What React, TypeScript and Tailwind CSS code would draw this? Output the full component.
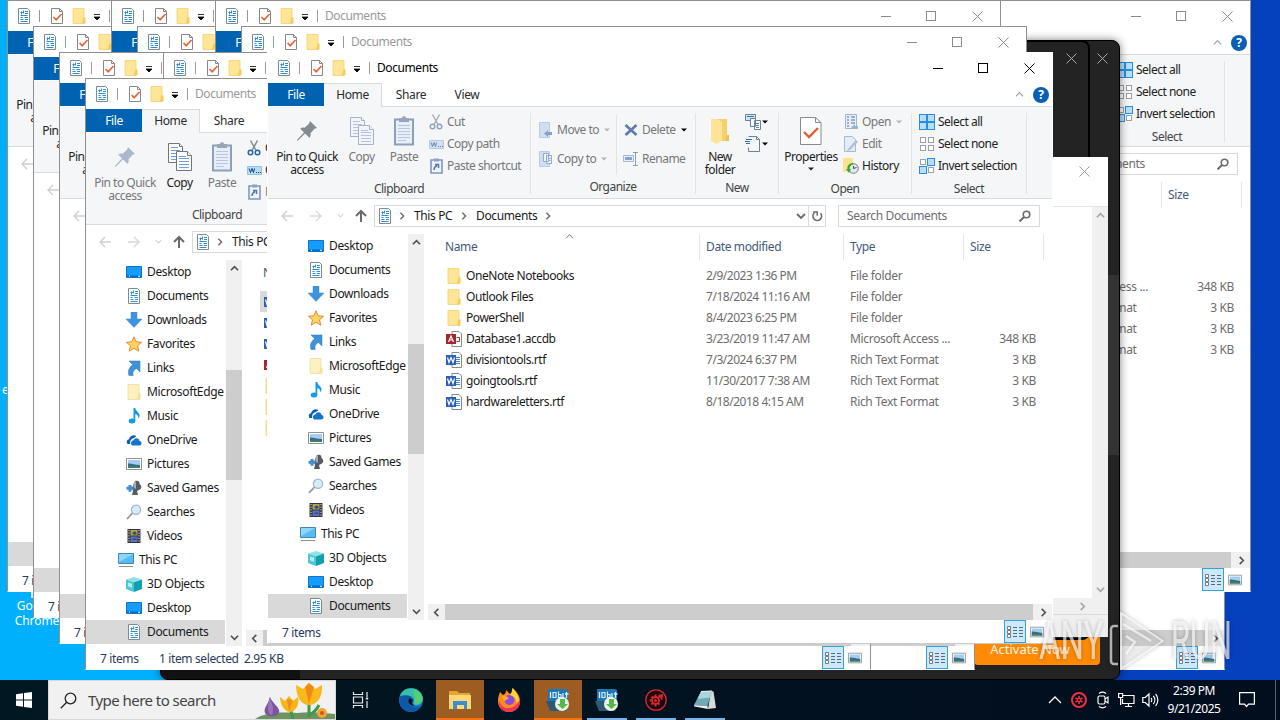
import React from 'react';

type FileRow = { name: string; date: string; type: string; size?: string; icon: string };

// which part of a window is not covered by the ones in front of it
type Part = 'all' | 'top' | 'left' | 'right' | 'foot';

const FILES: FileRow[] = [
  { name: 'OneNote Notebooks', date: '2/9/2023 1:36 PM', type: 'File folder', icon: 'folder' },
  { name: 'Outlook Files', date: '7/18/2024 11:16 AM', type: 'File folder', icon: 'folder' },
  { name: 'PowerShell', date: '8/4/2023 6:25 PM', type: 'File folder', icon: 'folder' },
  { name: 'Database1.accdb', date: '3/23/2019 11:47 AM', type: 'Microsoft Access ...', size: '348 KB', icon: 'access' },
  { name: 'divisiontools.rtf', date: '7/3/2024 6:37 PM', type: 'Rich Text Format', size: '3 KB', icon: 'word' },
  { name: 'goingtools.rtf', date: '11/30/2017 7:38 AM', type: 'Rich Text Format', size: '3 KB', icon: 'word' },
  { name: 'hardwareletters.rtf', date: '8/18/2018 4:15 AM', type: 'Rich Text Format', size: '3 KB', icon: 'word' },
];

const FILES_DESC = [...FILES].reverse();

const NAV = [
  ['Desktop', 'desktop'],
  ['Documents', 'doc'],
  ['Downloads', 'down'],
  ['Favorites', 'star'],
  ['Links', 'link'],
  ['MicrosoftEdge', 'palefolder'],
  ['Music', 'music'],
  ['OneDrive', 'cloud'],
  ['Pictures', 'picture'],
  ['Saved Games', 'games'],
  ['Searches', 'search'],
  ['Videos', 'video'],
  ['This PC', 'pc'],
  ['3D Objects', 'cube'],
  ['Desktop', 'desktop'],
  ['Documents', 'doc'],
];

const ICONS: Record<string, React.ReactNode> = {
  doc: (
    <>
      <path d="M2.500.5h9l2 2v13h-11z" fill="#fff" stroke="#7c8a92" />
      <path d="M4.500 4.500h3M9 3.500h3M9 5.500h3M4.500 7.500h7M4.500 9.500h2M8.500 9.500h3.500M4.500 11.500h3M9 11.500h3M4.500 13.500h7" stroke="#2d8fd0" />
      <path d="M7.500 2.500v3M5.500 3.500v3" stroke="#2d8fd0" />
    </>
  ),
  check: (
    <>
      <path d="M2.500.5h8l3 3v12h-11z" fill="#fff" stroke="#84888c" />
      <path d="M10.500.5v3h3" fill="none" stroke="#84888c" />
      <path d="M4.500 9l2.700 2.700L12.500 6" fill="none" stroke="#e2683c" strokeWidth="1.700" />
    </>
  ),
  folder: (
    <>
      <path d="M2 .5h11v15H2z" fill="#ffe596" stroke="#f3d06f" strokeWidth=".8" />
      <path d="M12.500 9.500h2v6H11z" fill="#f4ca58" />
    </>
  ),
  palefolder: (
    <>
      <path d="M2 .5h11v15H2z" fill="#fff1bf" stroke="#eddca0" strokeWidth=".8" />
      <path d="M12.500 9.500h2v6H11z" fill="#f3e09f" />
    </>
  ),
  desktop: (
    <>
      <path d="M.5 2.500h15v11H.5z" fill="#169dfc" stroke="#0b76cf" />
      <path d="M1 11.500h14v1.500H1z" fill="#0869bb" />
      <path d="M3 12.300h1M12 12.300h2" stroke="#fff" />
    </>
  ),
  down: <path d="M5 0h6v7h5l-8 8.500L0 7h5z" fill="#3c93de" stroke="#2d7fc6" strokeWidth=".4" />,
  star: (
    <path d="M8 .8l2.200 5 5.400.5-4.100 3.500 1.300 5.400L8 12.300l-4.800 2.900 1.300-5.400L.4 6.300l5.400-.5z" fill="#ffd262" stroke="#e08b33" />
  ),
  link: <path d="M3 1h11v11l-3.500-3.500C7 10.500 6.500 12.500 7.300 15.500H3C1.500 11 3 7.500 6.700 4.700z" fill="#3f92d8" stroke="#2d78b8" strokeWidth=".5" />,
  music: (
    <>
      <path d="M7.500 0h1.800c.2 3 3.700 4 4.200 7 .2 1.600-.5 2.800-1.200 3.500.4-3-1.300-3.800-3-4.500V13H7.500z" fill="#159be3" />
      <ellipse cx="6" cy="13" rx="3.300" ry="2.500" fill="#159be3" />
    </>
  ),
  cloud: (
    <>
      <path d="M1.500 12C0 9.500 1 7.500 3 7.300 3.500 4 7.500 2 10.500 4.200L8 6c-3 .5-4.300 3-3.800 6z" fill="#0c60b8" />
      <path d="M6 13.500c-2-2-.8-5 1.700-5.200C9 5.300 13.300 5.800 13.500 9c2.800.3 2.600 4.300 0 4.500z" fill="#1674cc" />
    </>
  ),
  picture: (
    <>
      <path d="M.5 2.500h15v11H.5z" fill="#fff" stroke="#8c9297" />
      <path d="M2 4h12v8H2z" fill="#a3cdf2" />
      <path d="M2 7.500c3-.5 6 1 12 1.500v3H2z" fill="#3d6a86" />
      <path d="M2 10.800c4-1 8 0 12 .5v.7H2z" fill="#3c8756" />
    </>
  ),
  games: (
    <>
      <path d="M9 1c3-1 5 .5 4.500 3 2.500 1.500 2.500 5-.5 6l-2 1 1 4H6l1-4-1-3z" fill="#555b60" />
      <path d="M9 1c-2 2-2 5-1 7l2 1V2z" fill="#a5abb0" />
      <path d="M2.500 5h3v1.700h2v3h-2v2h-3v-2H.5v-3h2z" fill="#3f8ed0" />
    </>
  ),
  search: (
    <>
      <path d="M1 15l5.500-6" stroke="#8f979d" strokeWidth="1.800" />
      <circle cx="10" cy="5.800" r="4.600" fill="#d7ecfa" stroke="#9eb5c6" strokeWidth="1.200" />
    </>
  ),
  video: (
    <>
      <path d="M1.500 1h13v14h-13z" fill="#33363b" />
      <path d="M4.500 2h7v5.500h-7z" fill="#b2a84a" />
      <path d="M4.500 8.500h7V14h-7z" fill="#5d6fc0" />
      <path d="M3 2v13M13 2v13" stroke="#e7e7e7" strokeDasharray="1.200 1.400" />
      <path d="M6 5l3-2 2 3-3 1zM5 12l4-2 2 2" fill="#394b86" />
    </>
  ),
  pc: (
    <>
      <path d="M.5 1.500h15v10H.5z" fill="#56bdf3" stroke="#4384b0" />
      <path d="M1 2h14L1 10z" fill="#8cd7fa" />
      <path d="M1 14.500h14" stroke="#8b959b" />
    </>
  ),
  cube: (
    <>
      <path d="M0 3.500L8 1l8 2.500-8 2.800z" fill="#8fe4ea" />
      <path d="M0 3.500l8 2.800V16l-8-3z" fill="#4cc7d3" />
      <path d="M16 3.500L8 6.300V16l8-3z" fill="#129fb1" />
      <path d="M2 6.500l4 1.300v4L2 10.300z" fill="#b5f0f4" />
    </>
  ),
  access: (
    <>
      <path d="M6 .5h7l2.500 2.500v12.500H6z" fill="#fff" stroke="#8b8b8b" />
      <path d="M10.500 6.500h3v4h-3" fill="none" stroke="#a4373a" />
      <path d="M0 3h10v10H0z" fill="#a4262c" />
      <path d="M2.500 11L5 5l2.500 6M3.500 9h3" fill="none" stroke="#fff" strokeWidth="1.200" />
    </>
  ),
  word: (
    <>
      <path d="M6 .5h7l2.500 2.500v12.500H6z" fill="#fff" stroke="#7d8b99" />
      <path d="M10 5.500h4M10 7.500h4M10 9.500h4M10 11.500h4" stroke="#4a86c8" />
      <path d="M0 3h10v10H0z" fill="#2b5fb3" />
      <path d="M1.500 5.500l1.500 5 2-5 2 5 1.500-5" fill="none" stroke="#fff" strokeWidth="1.200" />
    </>
  ),
};

function Icon({ name, size = 16, className = '' }: { name: string; size?: number; className?: string }) {
  return (
    <svg width={size} height={size} viewBox="0 0 16 16" className={`shrink-0 ${className}`}>
      {ICONS[name]}
    </svg>
  );
}

const Caret = ({ className = 'text-black' }: { className?: string }) => (
  <svg width="6" height="4" viewBox="0 0 6 4" className={`shrink-0 ${className}`}>
    <path d="M0 .5h6L3 3.500z" fill="currentColor" />
  </svg>
);

const Chevron = ({ dir, size = 10, className = 'text-[#505050]', weight = 1.8 }: { dir: 'up' | 'down' | 'left' | 'right'; size?: number; className?: string; weight?: number }) => {
  const d = { up: 'M1 7l4-4 4 4', down: 'M1 3l4 4 4-4', left: 'M7 1L3 5l4 4', right: 'M3 1l4 4-4 4' }[dir];
  return (
    <svg width={size} height={size} viewBox="0 0 10 10" className={`shrink-0 ${className}`}>
      <path d={d} fill="none" stroke="currentColor" strokeWidth={weight} />
    </svg>
  );
};

const Arrow = ({ dir, className }: { dir: 'left' | 'right' | 'up'; className: string }) => {
  const d = { left: 'M13 7H2M7 2L2 7l5 5', right: 'M1 7h11M7 2l5 5-5 5', up: 'M7 13V2M2 7l5-5 5 5' }[dir];
  return (
    <svg width="14" height="14" viewBox="0 0 14 14" className={`shrink-0 ${className}`}>
      <path d={d} fill="none" stroke="currentColor" strokeWidth={dir === 'up' ? 2 : 1.4} />
    </svg>
  );
};

const CloseGlyph = () => (
  <svg width="11" height="11" viewBox="0 0 11 11">
    <path d="M.5.5l10 10M10.500.5l-10 10" stroke="currentColor" strokeWidth="1" />
  </svg>
);

function TitleBar({ active, title }: { active?: boolean; title?: boolean }) {
  return (
    <div className="flex h-[30px] shrink-0 items-center bg-white pl-2">
      <Icon name="doc" />
      <div className="ml-[7px] h-3 w-px bg-[#9a9a9a]" />
      <Icon name="check" className="ml-[9px]" />
      <Icon name="folder" className="ml-1.5" />
      <svg width="8" height="8" viewBox="0 0 8 8" className="ml-1.5 mt-0.5">
        <path d="M1 1.500h6M1 4h6L4 7z" stroke="#000" strokeWidth=".8" />
      </svg>
      <div className="ml-2 h-3 w-px bg-[#9a9a9a]" />
      {title && <span className={`ml-[7px] tracking-[-0.42px] ${active ? 'text-black' : 'text-[#999]'}`}>Documents</span>}
      <div className={`ml-auto flex ${active ? 'text-black' : 'text-[#8a8a8a]'}`}>
        <div className="flex h-[29px] w-[46px] items-center justify-center pl-px"><div className="h-px w-2.5 bg-current" /></div>
        <div className="flex h-[29px] w-[46px] items-center justify-center"><div className="size-2.5 border border-current" /></div>
        <div className="flex h-[29px] w-[46px] items-center justify-center"><CloseGlyph /></div>
      </div>
    </div>
  );
}

function Tabs({ part }: { part: Part }) {
  return (
    <div className="flex h-6 shrink-0 bg-white text-[#2b2b2b]">
      <div className="flex h-[23px] w-14 items-center justify-center bg-[#0063b1] text-white">{part !== 'right' && 'File'}</div>
      <div className="flex w-[58px] items-center justify-center border-t border-r border-[#dadbdc] bg-[#f5f6f7] pb-px">{part === 'all' && 'Home'}</div>
      <div className="flex flex-1 items-center border-b border-[#dadbdc]">
        {part === 'all' && (
          <>
            <span className="w-[58px] text-center">Share</span>
            <span className="w-[54px] text-center">View</span>
          </>
        )}
        <Chevron dir="up" size={9} weight={1.3} className="ml-auto mr-[9px] text-[#a0a0a0]" />
        {part !== 'left' && (
          <div className="mr-[3px] flex size-4 items-center justify-center rounded-full bg-[#0a5fb4] text-[12px] font-bold text-white">?</div>
        )}
      </div>
    </div>
  );
}

const Group = ({ label, width, children }: { label?: string; width: string; children: React.ReactNode }) => (
  <div className={`flex shrink-0 flex-col border-r border-[#e2e3e4] ${width}`}>
    <div className="flex h-[69px]">{children}</div>
    <div className="pt-1 text-center leading-[15px] text-[#444]">{label}</div>
  </div>
);

const Big = ({ icon, lines, width, dim, caret }: { icon: React.ReactNode; lines: string[]; width: string; dim?: boolean; caret?: boolean }) => (
  <div className={`flex shrink-0 flex-col items-center leading-[13px] ${width} ${dim ? 'text-[#777]' : 'text-[#222]'}`}>
    <div className="mb-px flex h-9 items-center justify-center">{icon}</div>
    {lines.map(l => <span key={l} className="whitespace-nowrap">{l}</span>)}
    {caret && <Caret className="mt-1" />}
  </div>
);

const Small = ({ icon, label, dim, caret }: { icon: React.ReactNode; label: string; dim?: boolean; caret?: 'dim' | 'dark' }) => (
  <div className={`flex h-[22px] items-center whitespace-nowrap ${dim ? 'text-[#777]' : 'text-[#222]'}`}>
    <span className="mr-[3px] flex w-4 justify-center">{icon}</span>
    <span>{label}</span>
    {caret && <Caret className={`ml-[5px] ${caret === 'dim' ? 'text-[#b5b5b5]' : 'text-black'}`} />}
  </div>
);

const PinIcon = ({ dim }: { dim?: boolean }) => (
  <svg width="22" height="22" viewBox="0 0 22 22" className={dim ? 'text-[#aab7cd]' : 'text-[#848b91]'}>
    <path d="M14 1l7 7-2.500.8-4 4.500c.5 2.200 0 3.500-1 4.500L9 13.500 2 20.500 1 20.800 1.300 19.500 8 12.500 4.300 8.800c1.200-1.200 2.700-1.500 4.400-1l4.300-4z" fill="currentColor" />
  </svg>
);

const CopyIcon = ({ dim }: { dim?: boolean }) => (
  <svg width="24" height="28" viewBox="0 0 24 28" className={dim ? 'text-[#b3c3de]' : 'text-[#6f9bd6]'}>
    <g fill={dim ? '#f1f5fb' : '#fff'} stroke={dim ? '#a6b2c6' : '#70777e'}>
      <path d="M.5.5h11l3 3v16H.5z" />
      <path d="M11.500.5v3h3" />
    </g>
    <path d="M3 4.500h7M3 7.500h9M3 10.500h9M3 13.500h9M3 16.500h9" stroke="currentColor" />
    <g fill={dim ? '#f1f5fb' : '#fff'} stroke={dim ? '#a6b2c6' : '#70777e'}>
      <path d="M8.500 8.500h11l4 4v15h-15z" />
      <path d="M19.500 8.500v4h4" />
    </g>
    <path d="M11 13.500h7M11 15.500h10M11 18.500h10M11 21.500h10M11 24.500h10" stroke="currentColor" />
  </svg>
);

const PasteIcon = () => (
  <svg width="20" height="30" viewBox="0 0 20 30">
    <path d="M1 3.500h18v25H1z" fill="#e8eef8" stroke="#8c9fbb" strokeWidth="2" />
    <path d="M5 2h3c0-2.500 4-2.500 4 0h3v4H5z" fill="#98a5b8" />
    <path d="M4 9.500h12M4 12.500h12M4 15.500h12M4 18.500h12M4 21.500h12M4 24.500h8" stroke="#b6c6df" />
  </svg>
);

const ScissorsIcon = ({ dim }: { dim?: boolean }) => (
  <svg width="14" height="16" viewBox="0 0 14 16" fill="none" strokeWidth="1.500">
    <path d="M3.500.5l5.500 10M10.500.5L5 10.500" stroke={dim ? '#a8b0ba' : '#7e8a94'} />
    <g stroke={dim ? '#8fa3c2' : '#2168ac'}>
      <circle cx="3.500" cy="12.500" r="2.300" />
      <circle cx="10.500" cy="12.500" r="2.300" />
    </g>
  </svg>
);

const PathIcon = ({ dim }: { dim?: boolean }) => (
  <svg width="15" height="9" viewBox="0 0 15 9">
    <path d="M.5.5h14v8H.5z" fill={dim ? '#d4e0f2' : '#b7dcf6'} stroke={dim ? '#b6c8e2' : '#8fc4e8'} />
    <path d="M2 2.500l1.500 4 1.500-4 1.500 4 1-4M9 6.500h1M11 6.500h1M13 6.500h1" fill="none" stroke={dim ? '#6484b5' : '#17406c'} />
  </svg>
);

const ShortcutIcon = () => (
  <svg width="13" height="16" viewBox="0 0 13 16">
    <path d="M1 2h11v13H1z" fill="#eef3fa" stroke="#7f97bd" strokeWidth="1.600" />
    <path d="M4 .5h5v3H4z" fill="#8ea3c4" />
    <path d="M4 12c0-2.500 1-3.500 3-4.500M5 6.500h3.500V10" fill="none" stroke="#4f76b2" strokeWidth="1.500" />
  </svg>
);

const MoveIcon = ({ copy }: { copy?: boolean }) => (
  <svg width="14" height="16" viewBox="0 0 14 16">
    <path d="M.5.5h10v15H.5z" fill="#d2deef" stroke="#bccce2" />
    {copy ? (
      <>
        <path d="M4.500 2.500h5v8h-5zM7.500 4.500h5v8h-5z" fill="#eff4fb" stroke="#92abce" />
        <path d="M9 7.500h2.500M9 9.500h2.500" stroke="#92abce" />
      </>
    ) : (
      <path d="M5 11.500L9 8v2h4v3H9v2z" fill="#88a3cb" />
    )}
  </svg>
);

const SelectIcon = ({ kind }: { kind: 'all' | 'none' | 'invert' }) => {
  const cells = [[0, 0], [8, 0], [0, 8], [8, 8]];
  return (
    <svg width="16" height="16" viewBox="0 0 16 16">
      {cells.map(([x, y], i) => {
        const on = kind === 'all' || (kind === 'invert' && (i === 1 || i === 2));
        return on
          ? <rect key={i} x={x + 0.5} y={y + 0.5} width="7" height="7" fill="#b4e0fc" stroke="#2c8de0" />
          : <rect key={i} x={x + 1.5} y={y + 1.5} width="5" height="5" fill="#fff" stroke="#9c9fa3" />;
      })}
    </svg>
  );
};

const PinButton = ({ dim }: { dim?: boolean }) => (
  <Big width="ml-1.5 w-[66px]" icon={<PinIcon dim={dim} />} lines={['Pin to Quick', 'access']} dim={dim} />
);

const SelectGroup = () => (
  <Group label="Select" width="w-[115px]">
    <div className="ml-[7px] -mt-0.5 flex flex-col">
      <Small icon={<SelectIcon kind="all" />} label="Select all" />
      <Small icon={<SelectIcon kind="none" />} label="Select none" />
      <Small icon={<SelectIcon kind="invert" />} label="Invert selection" />
    </div>
  </Group>
);

function Ribbon({ selected, part }: { selected?: boolean; part: Part }) {
  return (
    <div className="flex h-[92px] shrink-0 border-b border-[#dadbdc] bg-[#f5f6f7] pt-1.5 pb-1 tracking-[-0.5px]">
      {part === 'left' && <PinButton />}
      {part === 'right' && <><div className="w-[644px]" /><SelectGroup /></>}
      {part === 'all' && <FullRibbon selected={selected} />}
    </div>
  );
}

function FullRibbon({ selected }: { selected?: boolean }) {
  return (
    <>
      <Group label="Clipboard" width="w-[263px]">
        <PinButton dim={selected} />
        <Big width="w-[43px]" icon={<CopyIcon dim={!selected} />} lines={['Copy']} dim={!selected} />
        <Big width="w-[42px]" icon={<PasteIcon />} lines={['Paste']} dim />
        <div className="ml-[3px] -mt-0.5 flex flex-col">
          <Small icon={<ScissorsIcon dim={!selected} />} label="Cut" dim={!selected} />
          <Small icon={<PathIcon dim={!selected} />} label="Copy path" dim={!selected} />
          <Small icon={<ShortcutIcon />} label="Paste shortcut" dim />
        </div>
      </Group>
      <Group label="Organize" width="w-[165px]">
        <div className="ml-[7px] mt-0.5 flex w-[79px] flex-col gap-[7px] border-r border-[#e2e3e4] pt-1">
          <Small icon={<MoveIcon />} label="Move to" dim caret="dim" />
          <Small icon={<MoveIcon copy />} label="Copy to" dim caret="dim" />
        </div>
        <div className="ml-1.5 mt-0.5 flex flex-col gap-[7px] pt-1">
          <Small
            icon={<svg width="14" height="12" viewBox="0 0 14 12"><path d="M1.500 1l11 10M12.500 1l-11 10" stroke="#5f7ca8" strokeWidth="2.600" /></svg>}
            label="Delete" dim caret="dark"
          />
          <Small
            icon={
              <svg width="16" height="14" viewBox="0 0 16 14">
                <path d="M.5 3.500h10v6H.5z" fill="#e8eff8" stroke="#a4b9d6" />
                <path d="M2 5h7v3H2z" fill="#88a4cc" />
                <path d="M10 .5h5M10 13.500h5M12.500.5v13" stroke="#8b9dba" />
              </svg>
            }
            label="Rename" dim
          />
        </div>
      </Group>
      <Group label="New" width="w-[83px]">
        <Big
          width="ml-0.5 w-[44px]"
          icon={
            <svg width="20" height="28" viewBox="0 0 20 28">
              <path d="M4 2h13v22H4z" fill="#f7cf6b" />
              <path d="M17 18h2v6h-4z" fill="#f2c04f" />
              <path d="M1 2h6l5 3v19l-5 3-6-3z" fill="#ffe396" />
            </svg>
          }
          lines={['New', 'folder']}
        />
        <div className="-mt-0.5 ml-[3px] flex flex-col">
          <div className="flex h-[22px] items-center gap-px">
            <svg width="16" height="16" viewBox="0 0 16 16" fill="#fff" stroke="#69839e">
              <path d="M.5.5h10v6H.5z" fill="#cfe4f6" />
              <path d="M2 2.500h7" stroke="#357ab7" />
              <path d="M5.500 4.500h5v8h-5zM9.500 6.500h6v9h-6z" />
              <path d="M11 9.500h3M11 11.500h3M11 13.500h3" />
            </svg>
            <Caret />
          </div>
          <div className="flex h-[22px] items-center gap-px">
            <svg width="16" height="16" viewBox="0 0 16 16" fill="none" stroke="#70808e">
              <path d="M3.500.5h8l3 3v12h-11v-4M11.500.5v3h3" />
              <path d="M1 3.500h6M0 5.500h5M1 7.500h4" stroke="#2870b0" />
            </svg>
            <Caret />
          </div>
        </div>
      </Group>
      <Group label="Open" width="w-[133px]">
        <Big
          width="ml-0.5 w-[60px]"
          icon={
            <svg width="22" height="28" viewBox="0 0 22 28" fill="#fff">
              <path d="M.5.5h15l5.500 5v22H.5zM15.500.5v5H21" stroke="#858b90" />
              <path d="M4 15l5 5 9-9" fill="none" stroke="#e25f2b" strokeWidth="2.400" />
            </svg>
          }
          lines={['Properties']}
          caret
        />
        <div className="ml-0.5 -mt-0.5 flex flex-col">
          <Small
            icon={
              <svg width="13" height="16" viewBox="0 0 13 16">
                <path d="M.5.5h11v14H.5z" fill="#e8eef7" stroke="#a5b4c9" />
                <path d="M2 3h2M6 3h4M2 6h2M6 6h4M2 9h2M6 9h4M2 12h2" stroke="#809cc4" strokeWidth="1.600" />
                <path d="M6 13.500L10 10v2h3v3h-3z" fill="#9db3d3" />
              </svg>
            }
            label="Open" dim caret="dim"
          />
          <Small
            icon={
              <svg width="14" height="16" viewBox="0 0 14 16">
                <path d="M.5.5h8l3 3v12H.5z" fill="#e4ecf7" stroke="#a9b9d0" />
                <path d="M4 13L12 4l2 2-8 8-3 1z" fill="#aebfda" />
              </svg>
            }
            label="Edit" dim
          />
          <Small
            icon={
              <svg width="16" height="16" viewBox="0 0 16 16">
                <path d="M0 0h10v14H0z" fill="#ffe28a" />
                <circle cx="10.500" cy="10.500" r="4.800" fill="#e3e8ec" stroke="#747c83" />
                <path d="M10.500 10.500V8M10.500 10.500l3-1" stroke="#474f56" />
                <path d="M10 5c-4 0-6 3-5.500 6L3 11l3 4 2-4-1.500-.3C6.500 8.500 8 6.500 11 6z" fill="#2fae35" />
              </svg>
            }
            label="History"
          />
        </div>
      </Group>
      <SelectGroup />
    </>
  );
}

function AddressBar({ part }: { part: Part }) {
  return (
    <div className="flex h-[35px] shrink-0 items-center bg-white pb-0.5 pl-3 text-[#1a1a1a]">
      <Arrow dir="left" className="text-[#d0d0d0]" />
      <Arrow dir="right" className="ml-[15px] text-[#d8d8d8]" />
      <Chevron dir="down" size={7} className="ml-[14px] text-[#d6d6d6]" />
      <Arrow dir="up" className="ml-[10px] text-[#6a6a6a]" />
      <div className="ml-[6px] flex h-[22px] w-[452px] items-center border border-[#d9d9d9] pl-0.5">
        {part === 'all' && (
          <>
            <Icon name="doc" />
            <Chevron dir="right" size={8} className="ml-[5px] text-[#6b6b6b]" />
            <span className="ml-2 w-[39px] whitespace-nowrap">This PC</span>
            <Chevron dir="right" size={8} className="ml-[7px] text-[#6b6b6b]" />
            <span className="ml-2 w-[61px]">Documents</span>
            <Chevron dir="right" size={8} className="ml-[7px] text-[#6b6b6b]" />
          </>
        )}
        <Chevron dir="down" className="ml-auto mr-0.5 text-[#6b6b6b]" />
        <div className="flex h-full w-[17px] items-center justify-center border-l border-[#d9d9d9]">
          <svg width="11" height="12" viewBox="0 0 11 12" fill="none" stroke="#6b6b6b" strokeWidth="1.700">
            <path d="M2.300 3A4.300 4.300 0 1 0 8.500 3.300" />
            <path d="M1 2h4.200v3.800" strokeWidth="1.500" />
          </svg>
        </div>
      </div>
      <div className="ml-3 flex h-[22px] w-[202px] items-center border border-[#d9d9d9] pl-2 text-[#6d6d6d]">
        {part !== 'left' && 'Search Documents'}
        <svg width="12" height="12" viewBox="0 0 12 12" className="ml-auto mr-2" fill="none" stroke="#6d6d6d">
          <circle cx="7.500" cy="4.500" r="3.300" strokeWidth="1.600" />
          <path d="M5 7l-4.500 4.500" strokeWidth="2" />
        </svg>
      </div>
    </div>
  );
}

function NavPane({ part }: { part: Part }) {
  return (
    <div className="flex w-[156px] shrink-0">
      <div className="w-[139px] overflow-hidden">
        {NAV.map(([label, icon], i) => (
          <div
            key={i}
            className={`flex h-6 items-center gap-[5px] whitespace-nowrap text-[#1a1a1a] ${icon === 'pc' ? 'pl-8' : 'pl-10'} ${i === NAV.length - 1 ? 'bg-[#d9d9d9]' : ''}`}
          >
            {part === 'all' && <><Icon name={icon} /><span>{label}</span></>}
          </div>
        ))}
      </div>
      <div className="ml-px flex w-4 flex-col items-center bg-[#f0f0f0]">
        <div className="flex h-[17px] items-center"><Chevron dir="up" size={9} /></div>
        <div className="mt-[93px] h-[110px] w-full bg-[#cdcdcd]" />
        <div className="mt-auto flex h-[17px] items-center"><Chevron dir="down" size={9} /></div>
      </div>
    </div>
  );
}

function FileList({ files, selected, part }: { files: FileRow[]; selected?: boolean; part: Part }) {
  return (
    <div className="flex min-w-0 flex-1 flex-col">
      <div className="flex h-[26px] shrink-0 text-[#43597a]">
        <div className="flex w-[276px] shrink-0 items-start border-r border-[#e5e5e5] pl-[21px] pt-[5px]">
          <span className="w-[120px]">{part === 'all' && 'Name'}</span>
          <Chevron dir="up" size={9} weight={1.1} className="-mt-[7px] text-[#777]" />
        </div>
        <div className="w-36 border-r border-[#e5e5e5] pl-1.5 pt-[5px]">{part === 'all' && 'Date modified'}</div>
        <div className="w-[120px] border-r border-[#e5e5e5] pl-1.5 pt-[5px]">{part === 'all' && 'Type'}</div>
        <div className="w-20 border-r border-[#e5e5e5] pl-1.5 pt-[5px]">Size</div>
      </div>
      <div className="mt-[5px] flex-1">
        {files.map((f, i) => (
          <div key={f.name} className={`ml-[18px] flex h-[21px] items-center whitespace-nowrap text-[#6d6d6d] ${selected && i === 0 ? 'bg-[#d9d9d9]' : ''}`}>
            <Icon name={f.icon} className="ml-1" />
            <span className="ml-1 w-60 pt-px tracking-[-0.45px] text-[#1a1a1a]">{part === 'all' && f.name}</span>
            <span className="w-36 pt-px tracking-[-0.47px]">{part === 'all' && f.date}</span>
            <span className="w-[120px] pt-px tracking-[-0.32px]">{f.type}</span>
            <span className="w-[66px] pt-px text-right">{f.size}</span>
          </div>
        ))}
      </div>
    </div>
  );
}

const HScroll = () => (
  <div className="ml-1 flex h-4 shrink-0 items-center bg-[#f0f0f0]">
    <div className="flex w-[17px] justify-center"><Chevron dir="left" size={9} /></div>
    <div className="h-4 w-[588px] bg-[#cdcdcd]" />
    <div className="flex flex-1 justify-center pl-0.5"><Chevron dir="right" size={9} /></div>
  </div>
);

function StatusBar({ selected, part }: { selected?: boolean; part: Part }) {
  return (
    <div className="flex h-[23px] shrink-0 items-center bg-white pl-[14px] whitespace-pre text-[#2a3a5c]">
      {(part === 'all' || part === 'left') && <span className="w-[59px] pt-0.5">7 items</span>}
      {selected && <><span className="w-[85px] pt-0.5">1 item selected</span><span className="pt-0.5">2.95 KB</span></>}
      <div className="ml-auto mr-1 flex h-[23px] w-[22px] items-center justify-center border border-[#35a0da] bg-[#cce8fb]">
        <svg width="18" height="14" viewBox="0 0 18 14" fill="none" stroke="#7a7a7a">
          <path d="M1.500 1.500h3v3h-3zM1.500 5.500h3v3h-3zM1.500 9.500h3v3h-3z" fill="#fff" />
          <path d="M7 2.500h4M13 2.500h4M7 5.500h4M13 5.500h4M7 8.500h4M13 8.500h4M7 11.500h4M13 11.500h4" stroke="#596b78" />
        </svg>
      </div>
      <Icon name="picture" size={14} className="mr-2" />
    </div>
  );
}

function Explorer({ className, active, selected, title, part = 'all' }: { className: string; active?: boolean; selected?: boolean; title?: boolean; part?: Part }) {
  return (
    <div className={`absolute flex h-[592px] w-[786px] flex-col overflow-hidden border bg-white ${active ? 'border-white border-b-[#c9c9c9]' : 'border-[#8f8f8f] border-b-white'} ${className}`}>
      {part !== 'foot' && (
        <>
          <TitleBar active={active} title={title} />
          <Tabs part={part} />
          <Ribbon selected={selected} part={part} />
        </>
      )}
      {part !== 'foot' && part !== 'top' && <AddressBar part={part} />}
      <div className="flex min-h-0 flex-1">
        {part === 'foot' || part === 'top' ? <div className="w-[156px] shrink-0" /> : <NavPane part={part} />}
        <div className="flex min-w-0 flex-1 flex-col justify-end">
          {(part === 'all' || part === 'right') && <FileList files={selected ? FILES_DESC : FILES} selected={selected} part={part} />}
          <HScroll />
        </div>
      </div>
      <StatusBar selected={selected} part={part} />
    </div>
  );
}

function Setup() {
  return (
    <>
      <div className="absolute top-10 left-40 flex h-[640px] w-[960px] flex-col justify-end overflow-hidden rounded-lg border border-black bg-[#232323] shadow-[0_0_8px_rgba(0,0,0,0.5)]">
        <div className="flex h-[62px] items-end">
          <div className="h-full w-[139px] bg-[#111]" />
          <div className="mb-[14px] ml-auto mr-[19px] flex h-12 w-[126px] items-center justify-center rounded bg-[#ff8a05] pt-4 pr-3.5 text-[13px] tracking-normal text-white/90">
            Activate Now
          </div>
        </div>
        <div className="absolute top-3 right-[11px] text-[#aaa]"><CloseGlyph /></div>
        <div className="absolute top-[234px] right-0 h-[180px] w-[11px] bg-[#333]" />
      </div>
      <div className="absolute top-10 left-[130px] h-[600px] w-[960px] rounded-lg border-2 border-black bg-[#232323]">
        <div className="absolute top-[11px] right-[11px] text-[#aaa]"><CloseGlyph /></div>
      </div>
      {/* licence dialog, mostly hidden by the front window */}
      <div className="absolute top-[157px] left-[700px] flex h-[480px] w-[408px] flex-col bg-white">
        <div className="flex h-[49px] items-start justify-end pr-[18px] pt-[9px] text-[#999]"><CloseGlyph /></div>
        <div className="flex flex-1 justify-end border-t border-[#e5e5e5]">
          <div className="flex w-4 flex-col items-center justify-between bg-[#f0f0f0] py-1">
            <Chevron dir="up" size={9} className="text-[#a5a5a5]" />
            <Chevron dir="down" size={9} className="text-[#a5a5a5]" />
          </div>
        </div>
        <div className="flex h-4 items-center justify-end bg-[#f0f0f0] pr-[21px]">
          <Chevron dir="right" size={9} className="text-[#a5a5a5]" />
        </div>
        <div className="h-[23px] border-t border-[#dadada] bg-[#f0f0f0]" />
      </div>
    </>
  );
}

function Watermark() {
  return (
    <div className="absolute top-[610px] left-[1039px] flex h-[62px] w-[200px] items-center font-['Roboto','Liberation_Sans',sans-serif] tracking-normal text-white/65 drop-shadow-[0_0_2px_rgba(0,0,0,0.4)]">
      <div className="w-[67px]"><span className="block origin-left scale-x-[0.62] text-[53px] leading-none">ANY</span></div>
      <svg width="60" height="62" viewBox="0 0 60 62" fill="none" stroke="currentColor">
        <path d="M12 16H8a3 3 0 0 0-3 3v32a3 3 0 0 0 3 3h4" strokeWidth="2.500" />
        <path d="M15 3l42 28-42 28z" fill="currentColor" fillOpacity=".4" strokeWidth="2" strokeLinejoin="round" />
        <path d="M17 14l28 17M20 26l9 6-9 12" strokeWidth="2.500" />
      </svg>
      <div className="ml-[5px] w-[60px]"><span className="block origin-left scale-x-[0.58] text-[53px] leading-none">RUN</span></div>
    </div>
  );
}

const IobitIcon = () => (
  <svg width="24" height="24" viewBox="0 0 24 24">
    <path d="M2 1h18l2 1v13H2z" fill="#1b78b4" />
    <path d="M0 13h22l-2 10H4z" fill="#2e5872" />
    <path d="M4.500 4v6M17 5v5M20.500 4v6M19 6h3.500" stroke="#d7efff" strokeWidth="1.300" />
    <path d="M7 4.500h3v5H7zM12.500 3.500v6h2.500v-3h-2.500" fill="none" stroke="#d7efff" strokeWidth="1.200" />
    <circle cx="16" cy="16" r="7" fill="#e9f3ea" />
    <path d="M14 11h5v5h3l-5.500 5-5.500-5h3z" fill="#56b948" />
  </svg>
);

const TaskButton = ({ children, className = '', bar = '' }: { children: React.ReactNode; className?: string; bar?: string }) => (
  <div className={`flex h-10 w-12 shrink-0 flex-col items-center ${className}`}>
    <div className="flex flex-1 items-center pt-0.5">{children}</div>
    <div className={`h-0.5 ${bar}`} />
  </div>
);

function Taskbar() {
  return (
    <div className="absolute inset-x-0 bottom-0 flex h-10 items-center bg-linear-to-r from-[#011822] to-[#020d1e] text-white">
      <TaskButton>
        <svg width="16" height="16" viewBox="0 0 16 16" fill="#fff">
          <path d="M0 2.300L7 1.300v6.200H0zM8 1.100L16 0v7.500H8zM0 8.500h7v6.200l-7-1zM8 8.500h8V16l-8-1.100z" />
        </svg>
      </TaskButton>
      <div className="flex h-10 w-72 items-center border border-[#d8d8d8] bg-[#f1f1f1] pl-[11px] text-[15px] tracking-[-0.55px] text-[#444]">
        <svg width="17" height="17" viewBox="0 0 17 17" fill="none" stroke="#222" strokeWidth="1.300">
          <circle cx="10.500" cy="6.500" r="5.300" />
          <path d="M6.700 10.300L.8 16.200" />
        </svg>
        <span className="ml-[11px] w-[130px] whitespace-nowrap">Type here to search</span>
        <svg width="80" height="38" viewBox="0 0 80 38" className="ml-auto">
          <path d="M0 38c10-7 30-7 42-6 14-2 28 0 38 1v5z" fill="#6d9460" />
          <path d="M38 38l-3-12M54 36V22M54 34c5-2 8-6 10-10" stroke="#3c9a4a" strokeWidth="3" fill="none" />
          <path d="M15 16c2 6 11 11 9 16-3 5-12 4-14 0-2-5 4-10 5-16z" fill="#7b559e" />
          <path d="M15 16c1 6 5 11 2 18-5 0-5-11-2-18z" fill="#9a74b8" />
          <path d="M25 16l5 4 4-5 4 5 5-4c2 8-3 15-8 15s-10-7-10-15z" fill="#f8b418" />
          <path d="M41 4l7 4 6-6 6 6 7-4c1 12-5 20-13 20S41 16 41 4z" fill="#fbb81c" />
          <path d="M50 6l4 17 5-17-5-4z" fill="#ee8b14" />
          <path d="M32 18l2 12 4-11z" fill="#ef8f17" />
          <circle cx="67" cy="32" r="5" fill="#f6a23a" />
          <circle cx="67" cy="32" r="2" fill="#c45f17" />
        </svg>
      </div>
      <TaskButton>
        <svg width="17" height="16" viewBox="0 0 17 16" fill="none" stroke="#e8e8e8" strokeWidth="1.200">
          <path d="M1.500 0v2.500h9V0M1.500 5h9v6h-9zM1.500 16v-2.500h9V16M15 0v5M15 9v7" />
          <path d="M13.800 6.500h2.400" strokeWidth="2" />
        </svg>
      </TaskButton>
      <TaskButton className="ml-[3px]">
        <svg width="24" height="24" viewBox="0 0 24 24">
          <circle cx="12" cy="12" r="12" fill="#1272c7" />
          <path d="M1 8C4-2 21-3 24 10c0 5-4 8-8 7-3-1-1-3-1-5 0-4-8-6-14-4z" fill="#35c1a8" />
          <path d="M15 1.500c5 1 9 6 8.500 10-1 4-5 5-8 4.500 0-1 1-2 0-5z" fill="#6bd850" opacity=".6" />
          <path d="M1 9c5-3 11-1 12 1-5 0-5 7 1 9 4 1 6 0 8-1-4 7-15 8-20 0-1-3-2-6-1-9z" fill="#0f58a6" />
          <path d="M11 10c-3 2-2 7 4 8-1-2-3-3-1-6z" fill="#03121f" />
        </svg>
      </TaskButton>
      <TaskButton className="ml-px bg-[#9d5c22]" bar="w-12 bg-[#f77310]">
        <svg width="22" height="20" viewBox="0 0 22 20">
          <path d="M0 1h8l2 2h11v4H0z" fill="#e3a630" />
          <path d="M0 5h22v14H0z" fill="#ffd978" />
          <path d="M4 11h14v8h-3v-4H8v4H4z" fill="#3b8ed0" />
        </svg>
      </TaskButton>
      <TaskButton className="ml-px">
        <svg width="24" height="24" viewBox="0 0 24 24">
          <path d="M3 4l3 3c2-1 3-2 3-5l4 4c2-1 2-3 3-6 4 4 7 8 7 13 0 6-5 11-11 11S1 20 1 13c0-4 1-6 2-9z" fill="#ff8a1d" />
          <path d="M2 12c1 6 6 9 11 8s9-5 10-9c1 8-4 13-11 13S1 19 2 12z" fill="#f4335b" />
          <circle cx="12.500" cy="12" r="5" fill="#8a4be0" />
          <path d="M15 0c4 4 7 8 7 13l-3 2c1-5-3-7-6-8 2-2 2-4 2-7z" fill="#ffd735" />
          <path d="M5 8c3-1 6 1 7 3-3 0-3 2-5 2z" fill="#ffae2b" />
        </svg>
      </TaskButton>
      <TaskButton className="ml-px bg-[#9d5c22]" bar="w-12 bg-[#f77310]"><IobitIcon /></TaskButton>
      <TaskButton className="ml-px" bar="w-10 bg-[#76b3e8]"><IobitIcon /></TaskButton>
      <TaskButton className="ml-px" bar="w-10 bg-[#76b3e8]">
        <svg width="22" height="22" viewBox="0 0 22 22" fill="none" stroke="#dd2433">
          <circle cx="11" cy="11" r="10.200" fill="#16080d" strokeWidth="1.300" />
          <circle cx="10.500" cy="11.500" r="3.500" strokeWidth="1.800" />
          <path d="M10.500 5.500v3M10.500 14.500v3M4.500 11.500h3M6.500 7.500l2 2M6.500 15.500l2-2M12.500 13.500l2 2M13 9l4-2.500-.5 4M13.500 6.500l3.500 0" strokeWidth="1.900" />
          <circle cx="10.500" cy="11.500" r="1.200" fill="#dd2433" />
        </svg>
      </TaskButton>
      <TaskButton className="ml-px" bar="w-10 bg-[#76b3e8]">
        <svg width="24" height="22" viewBox="0 0 24 22">
          <path d="M18 2l2.500.5L23 19l-8 1z" fill="#d4d9da" />
          <path d="M8 2.500L19 2l-4.500 15L1 16z" fill="#6fa9b3" />
          <path d="M8 2.500L19 2l-2 6.500L4.500 10z" fill="#a9d6dd" />
          <path d="M8 2.500L19 2" stroke="#eef4f4" strokeWidth="1.200" />
          <path d="M1 16l13.500 1 .5 3L1.500 17.500z" fill="#eceff0" />
        </svg>
      </TaskButton>
      <div className="ml-auto flex items-center">
        <svg width="14" height="8" viewBox="0 0 14 8" fill="none" stroke="#fff" strokeWidth="1.300" className="mr-[9px]"><path d="M1 7l6-6 6 6" /></svg>
        <svg width="16" height="16" viewBox="0 0 16 16" fill="none" stroke="#f02f3f" className="mr-2.5">
          <circle cx="8" cy="8" r="7" strokeWidth="2" />
          <path d="M8 4v8M4.500 6l7 4M11.500 6l-7 4" strokeWidth="1.700" />
          <circle cx="8" cy="8" r="1" fill="#000" stroke="none" />
        </svg>
        <svg width="12" height="18" viewBox="0 0 12 18" fill="none" stroke="#fff" strokeWidth="1.200" className="mr-[9px]">
          <rect x="1" y="5" width="7" height="8" rx="1.500" />
          <path d="M8 8l3-2v6l-3-2M2 2.500c2-1.500 5-1.500 7 0M2 15.500c2 1.500 5 1.500 7 0" />
        </svg>
        <svg width="17" height="16" viewBox="0 0 17 16" fill="none" stroke="#fff" strokeWidth="1.200" className="mr-[7px]">
          <path d="M5 3.500h11v8H4.500V7M7 14.500h7M10.500 11.500v3M.6 1.500h4v4h-4zM2.600 5.500V13" />
        </svg>
        <svg width="17" height="16" viewBox="0 0 17 16" fill="none" stroke="#fff" strokeWidth="1.200" className="mr-2">
          <path d="M.8 5.500h2.500L7 2v12l-3.700-3.500H.8zM9 6c1 1 1 3 0 4M11.300 4c2 2.300 2 5.700 0 8M13.600 2c3 3.500 3 8.500 0 12" />
        </svg>
        <div className="flex w-[54px] flex-col items-center text-[12px] leading-[18px] tracking-[-0.45px] whitespace-nowrap">
          <span>2:39 PM</span>
          <span>9/21/2025</span>
        </div>
        <svg width="16" height="16" viewBox="0 0 16 16" fill="none" stroke="#fff" strokeWidth="1.200" className="ml-[18px]">
          <path d="M.6.6h14.800v11.500H9.500L7.500 14.500 5.500 12.100H.6z" />
        </svg>
        <div className="ml-5 mr-1 h-10 w-px bg-[#56616b]" />
      </div>
    </div>
  );
}

export default function App() {
  return (
    <div className="relative h-[720px] w-[1280px] overflow-hidden bg-linear-to-r from-[#00b0fc] from-50% to-[#0540bd] to-50% font-['Noto_Sans','Open_Sans',sans-serif] text-[12px] leading-4 tracking-[-0.37px]">
      <span className="absolute top-[382px] left-[2px] text-white">e</span>
      <div className="absolute top-[590px] left-0 flex w-[74px] flex-col items-center leading-[15px] text-white">
        <div className="h-2 w-3 bg-[#dbe6ea]" />
        <span className="tracking-normal">Google</span>
        <span className="tracking-[-0.1px]">Chrome</span>
      </div>

      <Explorer className="top-[78px] left-[439px]" part="foot" />
      <Explorer className="top-0 left-[465px]" part="right" />
      <Setup />
      <Explorer className="top-0 left-[7px]" part="left" />
      <Explorer className="top-[26px] left-[33px]" part="left" />
      <Explorer className="top-0 left-[111px]" part="top" />
      <Explorer className="top-[26px] left-[137px]" part="top" />
      <Explorer className="top-0 left-[215px]" part="top" title />
      <Explorer className="top-[26px] left-[241px]" part="top" title />
      <Explorer className="top-[52px] left-[59px]" part="left" />
      <Explorer className="top-[52px] left-[163px]" part="top" />
      <Explorer className="top-[78px] left-[189px]" part="foot" />
      <Explorer className="top-[78px] left-[85px]" selected title />
      <Explorer className="top-[52px] left-[267px]" active title />

      <Watermark />
      <Taskbar />
    </div>
  );
}
